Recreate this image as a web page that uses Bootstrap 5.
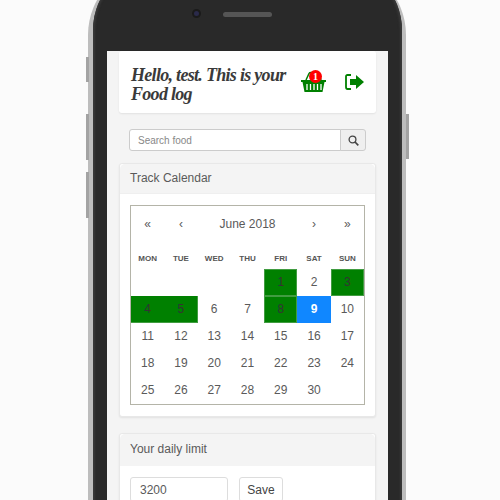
<!DOCTYPE html>
<html lang="en">
<head>
    <meta charset="UTF-8" />
    <meta name="viewport" content="width=device-width, initial-scale=1" />
    <title>Food log</title>
    <link href="https://cdn.jsdelivr.net/npm/bootstrap@5.3.0/dist/css/bootstrap.min.css" rel="stylesheet" />
    <style>
        html, body {
            height: 500px;
            overflow: hidden;
        }
        body {
            background: #fbfbfb;
            font-family: "Liberation Sans", sans-serif;
            font-size: 12px;
            color: #444;
        }
        .phone-shell {
            position: relative;
            width: 318px;
            height: 560px;
            margin: -37px 0 0 88px;
            padding: 0 4px 0 5px;
            background: #bdbdbd;
            border-radius: 72px 72px 0 0;
        }
        .phone-key {
            position: absolute;
            width: 3px;
            background: #a3a3a3;
        }
        .key-a { left: -2px; top: 94px; height: 25px; }
        .key-b { left: -2px; top: 151px; height: 46px; }
        .key-c { left: -2px; top: 209px; height: 46px; }
        .key-d { right: -3px; top: 151px; height: 45px; }
        .phone-body {
            height: 100%;
            padding: 0 14px;
            background: #292929;
            border-radius: 67px 67px 0 0;
            box-shadow: inset 2px 0 2px #383838, inset -2px 0 2px #383838;
        }
        .phone-top {
            height: 88px;
            padding: 46px 0 0 85px;
        }
        .phone-cam {
            width: 9px;
            height: 9px;
            border-radius: 50%;
            background: #2a2a4a;
            border: 2px solid #1a1a1a;
            margin-right: 22px;
        }
        .phone-speaker {
            width: 49px;
            height: 5px;
            margin-top: 3px;
            border-radius: 3px;
            background: #555;
        }
        .phone-screen {
            height: 460px;
            padding: 0 12px;
            background: #f4f4f4;
        }
        .app-card {
            border: 1px solid #e8e8e8;
            border-radius: 3px;
            box-shadow: 0 1px 2px rgba(0, 0, 0, .08);
        }
        .hello-card {
            height: 62px;
            padding: 0 11px 0 11px;
            border-color: #fff;
            border-top: 0;
        }
        .hello-title {
            width: 165px;
            margin: 0;
            padding-top: 7px;
            font-family: "Liberation Serif", serif;
            font-size: 18px;
            font-weight: 700;
            font-style: italic;
            letter-spacing: -.7px;
            line-height: 19px;
            color: #3a3a3a;
        }
        .basket-wrap {
            position: relative;
            width: 25px;
            height: 21px;
            margin-right: 19px;
        }
        .basket-count {
            position: absolute;
            top: -1px;
            left: 8px;
            width: 13px;
            height: 13px;
            border-radius: 50%;
            background: #f00;
            color: #fff;
            font-family: "Liberation Serif", serif;
            font-size: 10px;
            font-weight: 700;
            line-height: 13px;
            text-align: center;
        }
        .search-row {
            width: 237px;
            margin: 16px 0 12px 10px;
        }
        .search-row .form-control {
            height: 22px;
            min-height: 0;
            padding: 0 8px;
            font-size: 10px;
            border-color: #ccc;
            border-radius: 3px 0 0 3px;
        }
        .search-row .form-control::placeholder {
            color: #888;
        }
        .search-row .btn {
            width: 26px;
            height: 22px;
            padding: 0;
            background: #efefef;
            border-color: #ccc;
            border-radius: 0 3px 3px 0;
        }
        .app-card .card-header {
            height: 30px;
            padding: 0 10px;
            line-height: 29px;
            font-size: 12px;
            background: #f4f4f4;
            border-bottom: 1px solid #efefef;
            color: #5a5a5a;
        }
        .calendar-body {
            padding: 11px 10px 11px;
        }
        .cal-box {
            height: 200px;
            border: 1px solid #b4b4a8;
        }
        .cal-nav {
            height: 36px;
            color: #5a5a5a;
            font-size: 12px;
        }
        .cal-nav span, .cal-head span {
            width: 14.2857%;
            text-align: center;
        }
        .cal-month {
            flex: 0 0 auto;
        }
        .cal-head {
            height: 27px;
            padding-top: 11px;
            font-size: 8px;
            font-weight: 700;
            color: #555;
        }
        .cal-grid {
            display: grid;
            grid-template-columns: repeat(7, 1fr);
        }
        .cal-grid span {
            height: 27px;
            font-size: 12px;
            line-height: 27px;
            text-align: center;
            color: #5a5a5a;
        }
        .cal-grid .day-logged {
            background: #008000;
            color: #333;
            box-shadow: inset 0 0 0 1px rgba(144, 190, 144, .45);
        }
        .cal-grid .day-logged.edge-left {
            box-shadow: inset 0 -1px 0 rgba(144, 190, 144, .45);
        }
        .cal-grid .day-logged.edge-right {
            box-shadow: inset -1px -1px 0 rgba(144, 190, 144, .45);
        }
        .cal-grid .day-today {
            background: #1087ff;
            color: #fff;
            font-weight: 700;
        }
        .limit-card {
            margin-top: 16px;
        }
        .limit-card .card-header {
            height: 32px;
            line-height: 31px;
            border-bottom: 0;
        }
        .limit-row {
            padding: 11px 10px;
            gap: 11px;
        }
        .limit-row .form-control {
            width: 98px;
            height: 25px;
            min-height: 0;
            padding: 0 9px;
            font-size: 12px;
            color: #5a5a5a;
            border-color: #ddd;
            border-radius: 3px;
        }
        .limit-row .btn {
            width: 44px;
            height: 25px;
            padding: 0;
            font-size: 12px;
            color: #444;
            background: #fff;
            border-color: #ddd;
            border-radius: 3px;
        }
    </style>
</head>
<body>
<div class="phone-shell">
    <div class="phone-key key-a"></div>
    <div class="phone-key key-b"></div>
    <div class="phone-key key-c"></div>
    <div class="phone-key key-d"></div>
    <div class="phone-body">
        <div class="phone-top d-flex align-items-start">
            <div class="phone-cam"></div>
            <div class="phone-speaker"></div>
        </div>
        <div class="phone-screen">
            <div class="card app-card hello-card flex-row align-items-center">
                <h1 class="hello-title me-auto">Hello, test. This is your Food log</h1>
                <div class="basket-wrap">
                    <svg width="25" height="21" viewBox="0 0 25 21">
                        <path d="M5 9 L8 2.5 Q8.5 1.5 10 1.5 H16 Q17.5 1.5 18 2.5 L20 9" fill="none" stroke="#008000" stroke-width="1.5"/>
                        <path d="M0 9 H25 V11 H23.5 L21.5 21 H3.5 L1.5 11 H0 Z" fill="#008000"/>
                        <path d="M6 13 V19 M9.5 13 V19 M13 13 V19 M16.5 13 V19 M20 13 V19" stroke="#fff" stroke-width="1.3"/>
                    </svg>
                    <div class="basket-count">1</div>
                </div>
                <svg width="19" height="16" viewBox="0 0 19 16">
                    <path d="M6 1 H2.5 Q1 1 1 2.5 V13 Q1 15 2.5 15 H6" fill="none" stroke="#008000" stroke-width="1.8"/>
                    <path d="M5 5 H11 V1 L19 8 L11 15 V11 H5 Z" fill="#008000"/>
                </svg>
            </div>

            <div class="input-group search-row">
                <input type="text" class="form-control" placeholder="Search food" />
                <button class="btn d-flex align-items-center justify-content-center" type="button">
                    <svg width="11" height="11" viewBox="0 0 11 11">
                        <circle cx="4.5" cy="4.5" r="3.4" fill="none" stroke="#444" stroke-width="1.3"/>
                        <path d="M7 7 L10.3 10.3" stroke="#444" stroke-width="1.7"/>
                    </svg>
                </button>
            </div>

            <div class="card app-card">
                <div class="card-header">Track Calendar</div>
                <div class="calendar-body">
                    <div class="cal-box">
                        <div class="cal-nav d-flex align-items-center">
                            <span>«</span>
                            <span>‹</span>
                            <span class="cal-month flex-grow-1">June 2018</span>
                            <span>›</span>
                            <span>»</span>
                        </div>
                        <div class="cal-head d-flex">
                            <span>MON</span><span>TUE</span><span>WED</span><span>THU</span><span>FRI</span><span>SAT</span><span>SUN</span>
                        </div>
                        <div class="cal-grid">
                            <span></span><span></span><span></span><span></span>
                            <span class="day-logged">1</span><span>2</span><span class="day-logged">3</span>
                            <span class="day-logged edge-left">4</span><span class="day-logged edge-right">5</span><span>6</span><span>7</span>
                            <span class="day-logged">8</span><span class="day-today">9</span><span>10</span>
                            <span>11</span><span>12</span><span>13</span><span>14</span><span>15</span><span>16</span><span>17</span>
                            <span>18</span><span>19</span><span>20</span><span>21</span><span>22</span><span>23</span><span>24</span>
                            <span>25</span><span>26</span><span>27</span><span>28</span><span>29</span><span>30</span><span></span>
                        </div>
                    </div>
                </div>
            </div>

            <div class="card app-card limit-card">
                <div class="card-header">Your daily limit</div>
                <div class="limit-row d-flex">
                    <input type="text" class="form-control" value="3200" />
                    <button class="btn" type="button">Save</button>
                </div>
            </div>
        </div>
    </div>
</div>
<script src="https://cdn.jsdelivr.net/npm/bootstrap@5.3.0/dist/js/bootstrap.bundle.min.js"></script>
</body>
</html>
